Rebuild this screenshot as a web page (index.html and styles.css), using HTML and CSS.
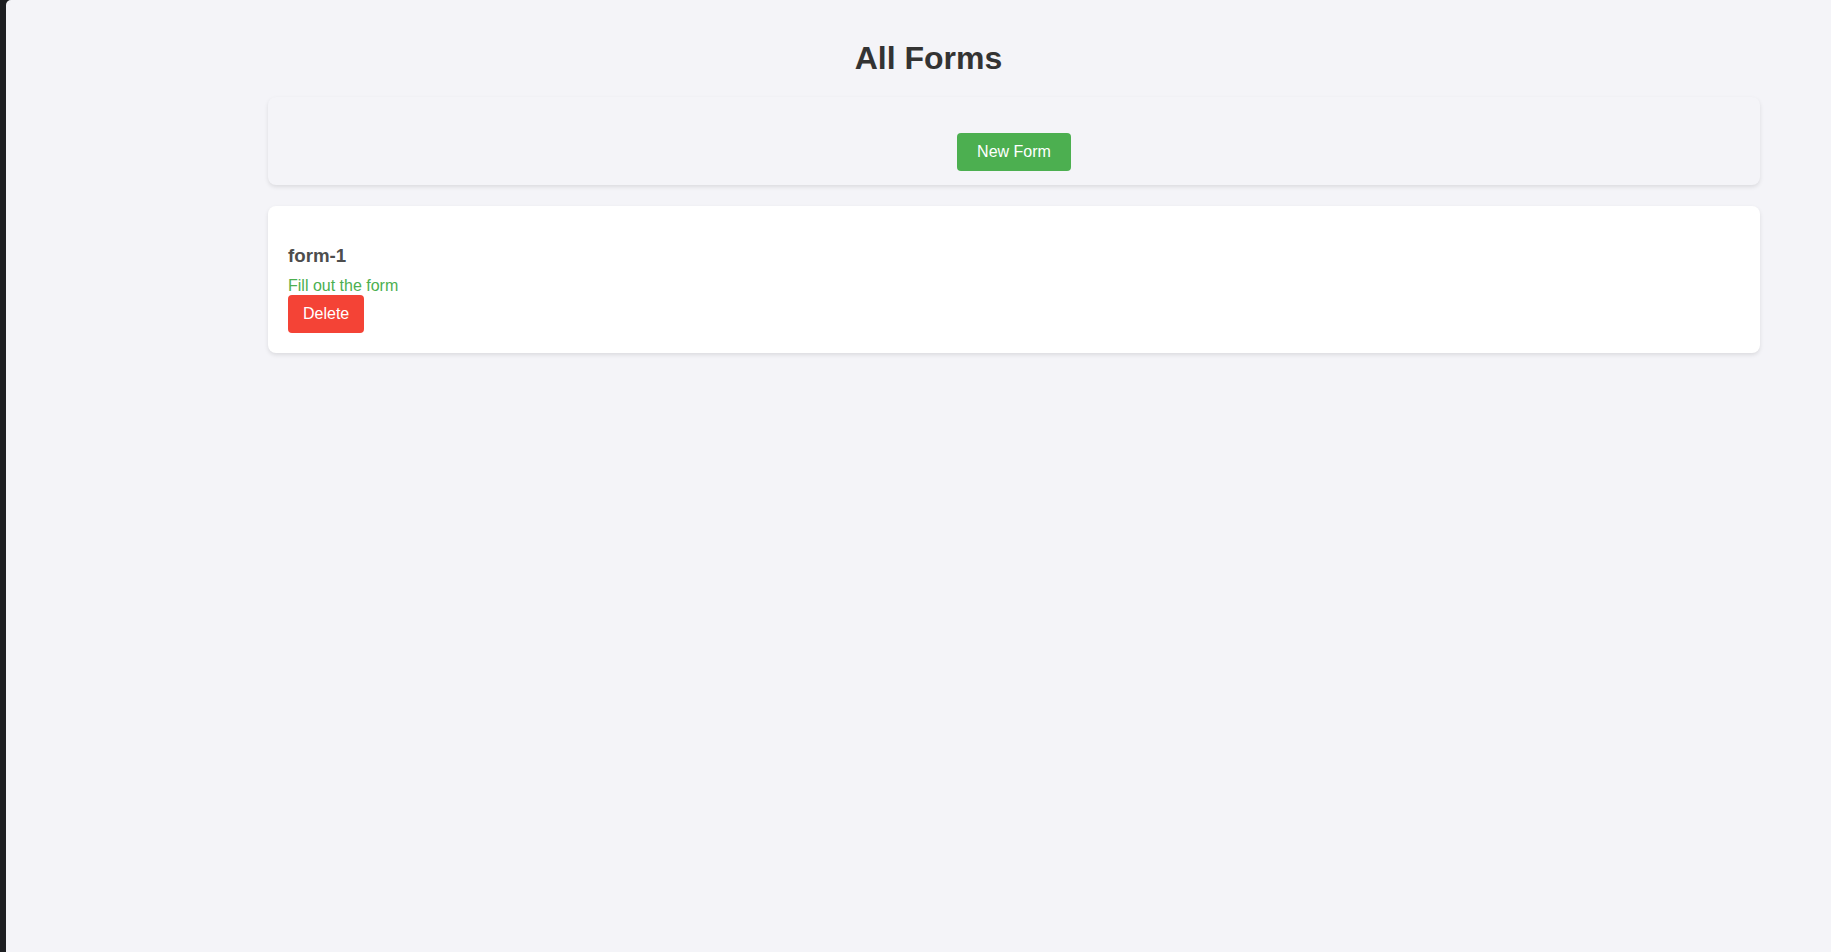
FILE: index.html
```html
<!DOCTYPE html>
<html lang="en">
<head>
<meta charset="utf-8">
<title>All Forms</title>
<link rel="stylesheet" href="styles.css">
</head>
<body>
<div class="app">
  <h1 class="page-title">All Forms</h1>
  <div class="list">
    <div class="card toolbar">
      <button class="btn btn-green">New Form</button>
    </div>
    <div class="card form-card">
      <h3 class="form-name">form-1</h3>
      <a class="form-link" href="#">Fill out the form</a>
      <button class="btn btn-red">Delete</button>
    </div>
  </div>
</div>
</body>
</html>
```

FILE: styles.css
```css
html, body {
  margin: 0;
  padding: 0;
  height: 100%;
}
body {
  background: #1e1f22;
  font-family: "Liberation Sans", Arial, sans-serif;
}
.app {
  margin-left: 6px;
  min-height: 100%;
  box-sizing: border-box;
  background: #f4f4f8;
  border-top-left-radius: 5px;
  padding: 18.5px 0 20px 20px;
}
.page-title {
  margin: 21.44px 0 19.94px;
  font-size: 32px;
  font-weight: bold;
  color: #333333;
  text-align: center;
}
.list {
  margin-left: 242px;
  width: 1492px;
}
.card {
  border-radius: 8px;
  box-shadow: 0 2px 4px rgba(0, 0, 0, 0.1);
  box-sizing: border-box;
}
.toolbar {
  background: #f4f4f8;
  padding: 36px 20px 14px;
  text-align: center;
  margin-bottom: 21px;
}
.form-card {
  background: #ffffff;
  padding: 20px;
}
.form-name {
  margin: 18.72px 0 10px;
  font-size: 18.72px;
  font-weight: bold;
  color: #4d4d4d;
}
.form-link {
  display: block;
  font-size: 16px;
  color: #4caf50;
  text-decoration: none;
}
.btn {
  border: none;
  border-radius: 4px;
  color: #ffffff;
  font-family: "Liberation Sans", Arial, sans-serif;
  font-size: 16px;
  line-height: normal;
  cursor: pointer;
}
.btn-green {
  background: #4caf50;
  padding: 10px 20px;
}
.btn-red {
  background: #f44336;
  padding: 10px 15px;
  display: block;
}
```
